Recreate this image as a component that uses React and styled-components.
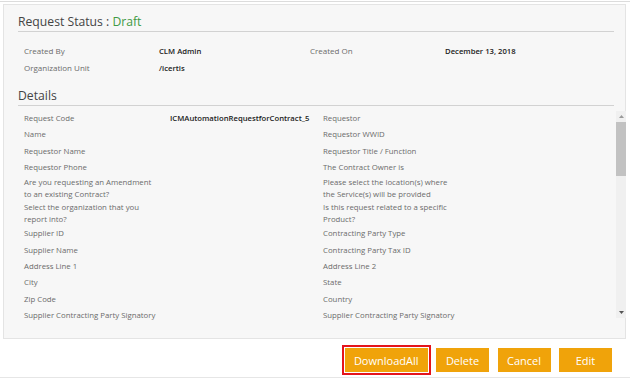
import React from "react";
import styled, { createGlobalStyle } from "styled-components";

const GlobalStyle = createGlobalStyle`
  html, body { margin: 0; padding: 0; background: #ffffff; }
  body { font-family: "Open Sans", "Noto Sans", sans-serif; }
`;

const Page = styled.div`
  width: 630px;
  height: 383px;
  box-sizing: border-box;
  padding-top: 1px;
  display: flex;
  flex-direction: column;
`;

const TopRule = styled.div`
  height: 1px;
  background: #dcdcdc;
  margin-bottom: 2px;
`;

const Panel = styled.section`
  margin-left: 3px;
  width: 623px;
  height: 335px;
  box-sizing: border-box;
  background: #f7f7f7;
  border: 1px solid #e4e4e4;
  padding-left: 14px;
  display: flex;
  flex-direction: column;
`;

const SectionTitle = styled.h2`
  margin: ${(p) => (p.$first ? "0" : "12px")} 11px 0 0;
  padding: ${(p) => (p.$first ? "9px" : "0")} 0 1px;
  font-size: 12.2px;
  line-height: 16px;
  font-weight: 400;
  color: #444444;
  border-bottom: 1px solid #d2d2d2;
`;

const Status = styled.span`
  color: #3f9a45;
`;

const MetaGrid = styled.div`
  margin-top: 10px;
  padding-left: 6px;
  display: grid;
  grid-template-columns: 135px 151px 135px 1fr;
  grid-auto-rows: 17px;
  align-items: center;
  font-size: 8px;
  line-height: 12px;
`;

const Label = styled.div`
  color: #6b6b6b;
  max-width: ${(p) => p.$max || "none"};
`;

const Value = styled.div`
  color: #222222;
  font-weight: 600;
  font-size: 7.7px;
  white-space: nowrap;
`;

const DetailsBody = styled.div`
  margin-top: 4px;
  margin-right: -1px;
  height: 211px;
  display: flex;
  align-items: flex-start;
`;

const DetailsViewport = styled.div`
  flex: 1;
  height: 100%;
  overflow: hidden;
  padding-left: 6px;
`;

const DetailsGrid = styled.div`
  display: grid;
  grid-template-columns: 146px 153px 146px 1fr;
  font-size: 7.8px;
  line-height: 12px;
`;

const Cell = styled.div`
  min-height: 16.3px;
  display: flex;
  align-items: center;
  padding: ${(p) => (p.$tall ? "0.5px" : "0")} 0;
`;

const ScrollTrack = styled.div`
  width: 10px;
  height: 207px;
  margin-top: 1px;
  background: #f0f0f0;
  display: flex;
  flex-direction: column;
`;

const ScrollArrow = styled.div`
  height: 11px;
  display: flex;
  align-items: center;
  justify-content: center;
  color: ${(p) => (p.$down ? "#555555" : "#9a9a9a")};
`;

const ScrollThumb = styled.div`
  height: 54px;
  background: #c2c2c2;
`;

const ScrollRest = styled.div`
  flex: 1;
`;

const ButtonBar = styled.div`
  height: 39px;
  box-sizing: border-box;
  padding: 9px 18px 0 0;
  border-bottom: 1px solid #e6e6e6;
  display: flex;
  justify-content: flex-end;
  align-items: flex-start;
  gap: 8.5px;
`;

const ActionButton = styled.button`
  height: 24px;
  min-width: 53px;
  padding: 0 ${(p) => (p.$highlight ? "9px" : "7px")};
  border: none;
  background: #f0a30a;
  color: #ffffff;
  font-family: "Open Sans", "Noto Sans", sans-serif;
  font-size: 11px;
  cursor: pointer;
  outline: ${(p) => (p.$highlight ? "2px solid #e4141c" : "none")};
  outline-offset: 1px;
`;

const Triangle = ({ down }) => (
  <svg width="5" height="3" viewBox="0 0 5 3" aria-hidden="true">
    <path d={down ? "M0 0H5L2.5 3Z" : "M0 3H5L2.5 0Z"} fill="currentColor" />
  </svg>
);

const meta = [
  ["Created By", "CLM Admin", "Created On", "December 13, 2018"],
  ["Organization Unit", "/icertis", "", ""],
];

const details = [
  ["Request Code", "ICMAutomationRequestforContract_5", "Requestor", ""],
  ["Name", "", "Requestor WWID", ""],
  ["Requestor Name", "", "Requestor Title / Function", ""],
  ["Requestor Phone", "", "The Contract Owner is", ""],
  ["Are you requesting an Amendment to an existing Contract?", "", "Please select the location(s) where the Service(s) will be provided", ""],
  ["Select the organization that you report into?", "", "Is this request related to a specific Product?", ""],
  ["Supplier ID", "", "Contracting Party Type", ""],
  ["Supplier Name", "", "Contracting Party Tax ID", ""],
  ["Address Line 1", "", "Address Line 2", ""],
  ["City", "", "State", ""],
  ["Zip Code", "", "Country", ""],
  ["Supplier Contracting Party Signatory", "", "Supplier Contracting Party Signatory", ""],
];

export default function App() {
  return (
    <>
      <GlobalStyle />
      <Page>
        <TopRule />
        <Panel>
          <SectionTitle $first>
            Request Status : <Status>Draft</Status>
          </SectionTitle>
          <MetaGrid>
            {meta.map((r, i) => (
              <React.Fragment key={i}>
                <Label>{r[0]}</Label>
                <Value>{r[1]}</Value>
                <Label>{r[2]}</Label>
                <Value>{r[3]}</Value>
              </React.Fragment>
            ))}
          </MetaGrid>
          <SectionTitle>Details</SectionTitle>
          <DetailsBody>
            <DetailsViewport>
              <DetailsGrid>
                {details.map((r, i) => {
                  const tall = r[0].length > 40 || r[2].length > 40;
                  return (
                    <React.Fragment key={i}>
                      <Cell $tall={tall}>
                        <Label $max="136px">{r[0]}</Label>
                      </Cell>
                      <Cell $tall={tall}>
                        <Value>{r[1]}</Value>
                      </Cell>
                      <Cell $tall={tall}>
                        <Label $max="136px">{r[2]}</Label>
                      </Cell>
                      <Cell $tall={tall}>
                        <Value>{r[3]}</Value>
                      </Cell>
                    </React.Fragment>
                  );
                })}
              </DetailsGrid>
            </DetailsViewport>
            <ScrollTrack>
              <ScrollArrow>
                <Triangle />
              </ScrollArrow>
              <ScrollThumb />
              <ScrollRest />
              <ScrollArrow $down>
                <Triangle down />
              </ScrollArrow>
            </ScrollTrack>
          </DetailsBody>
        </Panel>
        <ButtonBar>
          <ActionButton $highlight>DownloadAll</ActionButton>
          <ActionButton>Delete</ActionButton>
          <ActionButton>Cancel</ActionButton>
          <ActionButton>Edit</ActionButton>
        </ButtonBar>
      </Page>
    </>
  );
}
